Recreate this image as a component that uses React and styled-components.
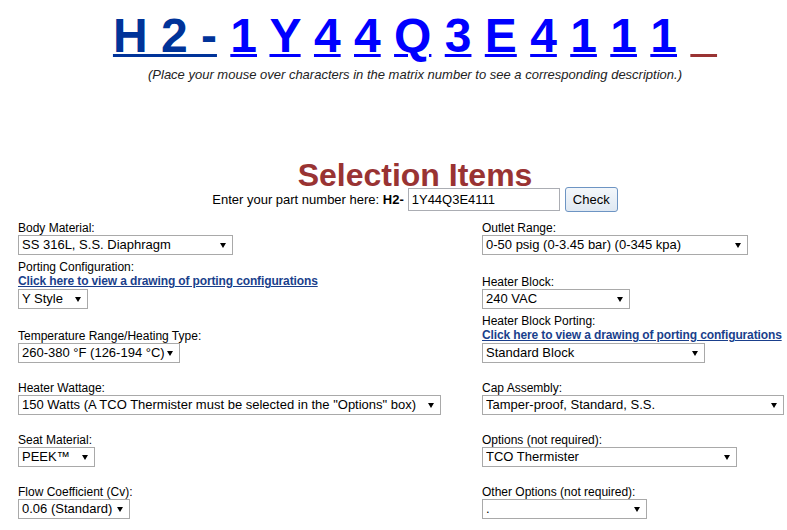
import React from "react";
import styled, { createGlobalStyle } from "styled-components";

const MATRIX = ["1", "Y", "4", "4", "Q", "3", "E", "4", "1", "1", "1"];

const LEFT = [
  { label: "Body Material:", value: "SS 316L, S.S. Diaphragm", width: 215 },
  { label: "Porting Configuration:", link: true, value: "Y Style", width: 70 },
  { label: "Temperature Range/Heating Type:", value: "260-380 °F (126-194 °C)", width: 162 },
  {
    label: "Heater Wattage:",
    value: '150 Watts (A TCO Thermister must be selected in the "Options" box)',
    width: 423,
  },
  { label: "Seat Material:", value: "PEEK™", width: 77 },
  { label: "Flow Coefficient (Cv):", value: "0.06 (Standard)", width: 112 },
];

const RIGHT = [
  { label: "Outlet Range:", value: "0-50 psig (0-3.45 bar) (0-345 kpa)", width: 266 },
  { label: "Heater Block:", value: "240 VAC", width: 148 },
  { label: "Heater Block Porting:", link: true, value: "Standard Block", width: 223 },
  { label: "Cap Assembly:", value: "Tamper-proof, Standard, S.S.", width: 302 },
  { label: "Options (not required):", value: "TCO Thermister", width: 255 },
  { label: "Other Options (not required):", value: ".", width: 165 },
];

const GlobalStyle = createGlobalStyle`
  html, body {
    margin: 0;
    padding: 0;
    background: #fff;
  }
  body {
    font-family: "Liberation Sans", Arial, sans-serif;
    color: #000;
  }
`;

const Page = styled.div`
  width: 787px;
  height: 530px;
  overflow: hidden;
`;

const Header = styled.header`
  padding: 9px 0 0 43px;
  text-align: center;
`;

const Matrix = styled.div`
  font-size: 48px;
  font-weight: bold;
  line-height: 54px;
  white-space: pre;
`;

const Code = styled.a`
  color: ${({ $tone }) => $tone};
  text-decoration: underline;
  text-decoration-thickness: 3px;
  text-underline-offset: 2px;
  cursor: pointer;
`;

const Hint = styled.div`
  margin-top: 4px;
  font-size: 13px;
  font-style: italic;
  line-height: 15px;
  color: #222;
`;

const DescriptionArea = styled.div`
  height: 81px;
`;

const Title = styled.h1`
  margin: 0;
  font-size: 32px;
  line-height: 24px;
  font-weight: bold;
  color: #993333;
`;

const PartRow = styled.div`
  display: flex;
  justify-content: center;
  align-items: center;
  height: 25px;
  font-size: 13px;
`;

const PartInput = styled.input`
  box-sizing: border-box;
  width: 152px;
  height: 23px;
  margin-left: 4px;
  padding: 0 3px;
  border: 1px solid #abadb3;
  font-family: inherit;
  font-size: 13px;
  color: #000;
`;

const CheckButton = styled.button`
  box-sizing: border-box;
  width: 53px;
  height: 25px;
  margin-left: 5px;
  padding: 0;
  border: 1px solid #6d94c3;
  border-radius: 3px;
  background: linear-gradient(#f3f7fb, #dfe8f2);
  font-family: inherit;
  font-size: 13px;
  color: #000;
`;

const Rows = styled.div`
  margin-top: 9px;
  padding-left: 18px;
`;

const Row = styled.div`
  display: grid;
  grid-template-columns: 464px 1fr;
  align-items: end;
  box-sizing: border-box;
  min-height: ${({ $first }) => ($first ? 0 : 52)}px;
  padding-top: ${({ $first }) => ($first ? 0 : 5)}px;
`;

const Cell = styled.div`
  display: flex;
  flex-direction: column;
  align-items: flex-start;
`;

const Label = styled.div`
  font-size: 12px;
  line-height: 14px;
`;

const DrawingLink = styled.a`
  font-size: 12px;
  font-weight: bold;
  line-height: 15px;
  letter-spacing: -0.13px;
  white-space: nowrap;
  color: #1a3f8c;
  text-decoration: underline;
  cursor: pointer;
`;

const SelectBox = styled.div`
  position: relative;
  width: ${({ $width }) => $width}px;

  &::after {
    content: "";
    position: absolute;
    right: 7px;
    top: 8px;
    border-left: 3.5px solid transparent;
    border-right: 3.5px solid transparent;
    border-top: 5px solid #000;
    pointer-events: none;
  }
`;

const Select = styled.select`
  appearance: none;
  box-sizing: border-box;
  display: block;
  width: 100%;
  height: 20px;
  margin: 0;
  padding: 0 12px 0 3px;
  border: 1px solid #a9a9a9;
  border-radius: 0;
  background: #fff;
  font-family: "Liberation Sans", Arial, sans-serif;
  font-size: 13px;
  line-height: 18px;
  color: #000;
`;

function Field({ item }) {
  return (
    <Cell>
      <Label>{item.label}</Label>
      {item.link && <DrawingLink>Click here to view a drawing of porting configurations</DrawingLink>}
      <SelectBox $width={item.width}>
        <Select defaultValue={item.value}>
          <option>{item.value}</option>
        </Select>
      </SelectBox>
    </Cell>
  );
}

export default function App() {
  return (
    <Page>
      <GlobalStyle />
      <Header>
        <Matrix>
          <Code $tone="#003399">H 2 -</Code>
          {MATRIX.map((ch, i) => (
            <React.Fragment key={i}>
              {" "}
              <Code $tone="#0000ff">{ch}</Code>
            </React.Fragment>
          ))}{" "}
          <Code $tone="#993333">{"\u2007"}</Code>
        </Matrix>
        <Hint>
          (Place your mouse over characters in the matrix number to see a corresponding description.)
        </Hint>
        <DescriptionArea />
        <Title>Selection Items</Title>
        <PartRow>
          <span>
            Enter your part number here: <b>H2-</b>
          </span>
          <PartInput defaultValue="1Y44Q3E4111" />
          <CheckButton>Check</CheckButton>
        </PartRow>
      </Header>
      <Rows>
        {LEFT.map((item, i) => (
          <Row key={item.label} $first={i === 0}>
            <Field item={item} />
            <Field item={RIGHT[i]} />
          </Row>
        ))}
      </Rows>
    </Page>
  );
}
